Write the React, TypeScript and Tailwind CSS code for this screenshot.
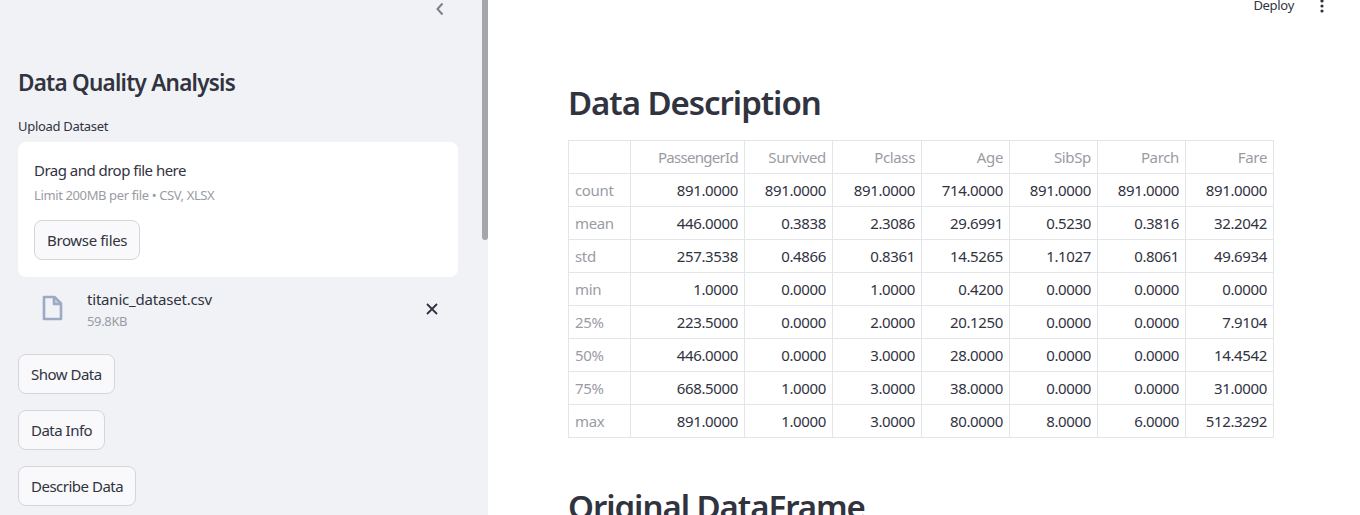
const font = "font-['Noto_Sans',sans-serif]";

const columns = ["PassengerId", "Survived", "Pclass", "Age", "SibSp", "Parch", "Fare"];
const widths = ["w-[62px]", "w-[114px]", "w-[88px]", "w-[89px]", "w-[88px]", "w-[88px]", "w-[88px]", "w-[88px]"];

const rows = [
  ["count", "891.0000", "891.0000", "891.0000", "714.0000", "891.0000", "891.0000", "891.0000"],
  ["mean", "446.0000", "0.3838", "2.3086", "29.6991", "0.5230", "0.3816", "32.2042"],
  ["std", "257.3538", "0.4866", "0.8361", "14.5265", "1.1027", "0.8061", "49.6934"],
  ["min", "1.0000", "0.0000", "1.0000", "0.4200", "0.0000", "0.0000", "0.0000"],
  ["25%", "223.5000", "0.0000", "2.0000", "20.1250", "0.0000", "0.0000", "7.9104"],
  ["50%", "446.0000", "0.0000", "3.0000", "28.0000", "0.0000", "0.0000", "14.4542"],
  ["75%", "668.5000", "1.0000", "3.0000", "38.0000", "0.0000", "0.0000", "31.0000"],
  ["max", "891.0000", "1.0000", "3.0000", "80.0000", "8.0000", "6.0000", "512.3292"],
];

function SideButton({ label }: { label: string }) {
  return (
    <button className="block h-10 rounded-lg border border-[#d5d6da] bg-[#f9f9fb] px-3 text-[15px] tracking-[-0.5px] text-[#31333f]">
      {label}
    </button>
  );
}

function Sidebar() {
  return (
    <aside className="relative h-[515px] w-[488px] shrink-0 overflow-hidden bg-[#f0f2f6] pl-[18px] pr-[30px]">
      <div className="absolute right-0 top-0 h-[240px] w-[6px] rounded-b-sm bg-[#a4a6ab]" />
      <div className="flex h-[18px] justify-end pr-[10px]">
        <svg width="16" height="18" viewBox="0 0 16 18" fill="none" stroke="#7d7f87" strokeWidth="2">
          <path d="M10.5 3.5 5.5 9l5 5.5" />
        </svg>
      </div>
      <h2 className="mt-[49px] text-[22.5px] font-semibold leading-[32px] tracking-[-0.76px] text-[#31333f]">Data Quality Analysis</h2>
      <p className="mt-[17px] text-[13px] leading-[20px] tracking-[-0.3px] text-[#31333f]">Upload Dataset</p>
      <div className="mt-[6px] h-[135px] rounded-lg bg-white px-4 pt-[16px]">
        <p className="text-[15px] leading-[24px] tracking-[-0.52px] text-[#31333f]">Drag and drop file here</p>
        <p className="mt-[4px] text-[13px] leading-[18px] tracking-[-0.38px] text-[#9a9ca4]">Limit 200MB per file • CSV, XLSX</p>
        <button className="mt-[16px] h-10 rounded-lg border border-[#d5d6da] bg-[#f9f9fb] px-3 text-[15px] tracking-[-0.35px] text-[#31333f]">
          Browse files
        </button>
      </div>
      <div className="mt-[9px] flex h-[46px] items-center pl-[22px] pr-[19px]">
        <svg width="24" height="28" viewBox="0 0 24 28" fill="none" stroke="#9eaac5" strokeWidth="2.6" strokeLinejoin="round" className="shrink-0">
          <path d="M4 2h10.5l6.5 6.5V24H4z" />
          <path d="M14 2v7h7" fill="#9eaac5" fillOpacity="0.35" />
        </svg>
        <div className="ml-[23px] min-w-0 flex-1">
          <p className="text-[15px] leading-[24px] tracking-[-0.2px] text-[#31333f]">titanic_dataset.csv</p>
          <p className="text-[13px] leading-[20px] tracking-[-0.35px] text-[#9a9ca4]">59.8KB</p>
        </div>
        <svg width="14" height="14" viewBox="0 0 14 14" fill="none" stroke="#31333f" strokeWidth="1.8" className="shrink-0">
          <path d="M2 2l10 10M12 2 2 12" />
        </svg>
      </div>
      <div className="mt-[22px] flex flex-col items-start gap-4">
        <SideButton label="Show Data" />
        <SideButton label="Data Info" />
        <SideButton label="Describe Data" />
      </div>
    </aside>
  );
}

function DataTable() {
  return (
    <table className="w-[706px] table-fixed border-collapse text-[15px] tracking-[-0.35px]">
      <colgroup>
        {widths.map((w, i) => (
          <col key={i} className={w} />
        ))}
      </colgroup>
      <thead>
        <tr className="h-[33px]">
          <th className="border border-[#e4e5e8]" />
          {columns.map((c) => (
            <th
              key={c}
              className={
                c === "PassengerId"
                  ? "border border-[#e4e5e8] px-[6px] text-right font-normal tracking-[-0.7px] text-[#9a9ca4]"
                  : "border border-[#e4e5e8] px-[6px] text-right font-normal text-[#9a9ca4]"
              }
            >
              {c}
            </th>
          ))}
        </tr>
      </thead>
      <tbody>
        {rows.map((row) => (
          <tr key={row[0]} className="h-[33px]">
            {row.map((cell, i) =>
              i === 0 ? (
                <th key={i} className="border border-[#e4e5e8] px-[6px] text-left font-normal text-[#9a9ca4]">
                  {cell}
                </th>
              ) : (
                <td key={i} className="border border-[#e4e5e8] px-[6px] text-right text-[#31333f]">
                  {cell}
                </td>
              ),
            )}
          </tr>
        ))}
      </tbody>
    </table>
  );
}

export default function App() {
  return (
    <div className={`flex h-[515px] w-[1360px] overflow-hidden bg-white ${font}`}>
      <Sidebar />
      <main className="min-w-0 flex-1">
        <header className="flex h-[12px] items-center justify-end pr-[36px]">
          <span className="text-[13px] tracking-[-0.3px] text-[#31333f]">Deploy</span>
          <svg width="4" height="14" viewBox="0 0 4 14" fill="#31333f" className="ml-[26px]">
            <circle cx="2" cy="2" r="1.6" />
            <circle cx="2" cy="7" r="1.6" />
            <circle cx="2" cy="12" r="1.6" />
          </svg>
        </header>
        <div className="pl-[80px]">
          <h1 className="mt-[68px] text-[33px] font-semibold leading-[46px] tracking-[-1.05px] text-[#31333f]">Data Description</h1>
          <div className="mt-[14px]">
            <DataTable />
          </div>
          <h1 className="mt-[46px] text-[33px] font-semibold leading-[46px] tracking-[-1.05px] text-[#31333f]">Original DataFrame</h1>
        </div>
      </main>
    </div>
  );
}
